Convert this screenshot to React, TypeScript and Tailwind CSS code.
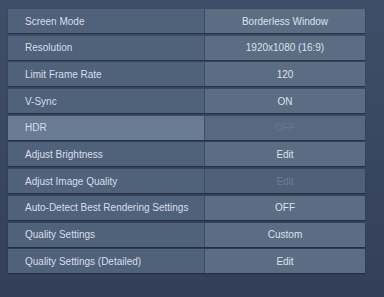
import React from "react";

type Row = {
  label: string;
  value: string;
  highlight?: boolean;
  disabled?: boolean;
};

const rows: Row[] = [
  { label: "Screen Mode", value: "Borderless Window" },
  { label: "Resolution", value: "1920x1080 (16:9)" },
  { label: "Limit Frame Rate", value: "120" },
  { label: "V-Sync", value: "ON" },
  { label: "HDR", value: "OFF", highlight: true, disabled: true },
  { label: "Adjust Brightness", value: "Edit" },
  { label: "Adjust Image Quality", value: "Edit", disabled: true },
  { label: "Auto-Detect Best Rendering Settings", value: "OFF" },
  { label: "Quality Settings", value: "Custom" },
  { label: "Quality Settings (Detailed)", value: "Edit" },
];

export default function App() {
  return (
    <div
      className="w-[384px] h-[297px] overflow-hidden bg-gradient-to-b from-[#3f4e68] to-[#333f57] pt-[9px] pl-[8px]"
      style={{ fontFamily: '"Liberation Sans", Arial, sans-serif' }}
    >
      <div className="w-[357px] flex flex-col gap-[2.7px]">
        {rows.map((r) => (
          <div
            key={r.label}
            className="flex h-[24px] shadow-[0_1px_1px_rgba(20,28,42,0.5)]"
          >
            <div
              className={`w-[196px] flex items-center pl-[17px] text-[10px] text-[#d8dee7] ${
                r.highlight ? "bg-[#6a7c93]" : "bg-[#50617a]"
              }`}
            >
              {r.label}
            </div>
            <div className="w-[1px] bg-[#3e4c63]" />
            <div
              className={`flex-1 flex items-center justify-center text-[10px] ${
                r.disabled
                  ? r.highlight
                    ? "bg-[#58697f] text-[#66788e]"
                    : "bg-[#4f6077] text-[#6c7e94]"
                  : "bg-[#5b6c83] text-[#dde2ea]"
              }`}
            >
              {r.value}
            </div>
          </div>
        ))}
      </div>
    </div>
  );
}
